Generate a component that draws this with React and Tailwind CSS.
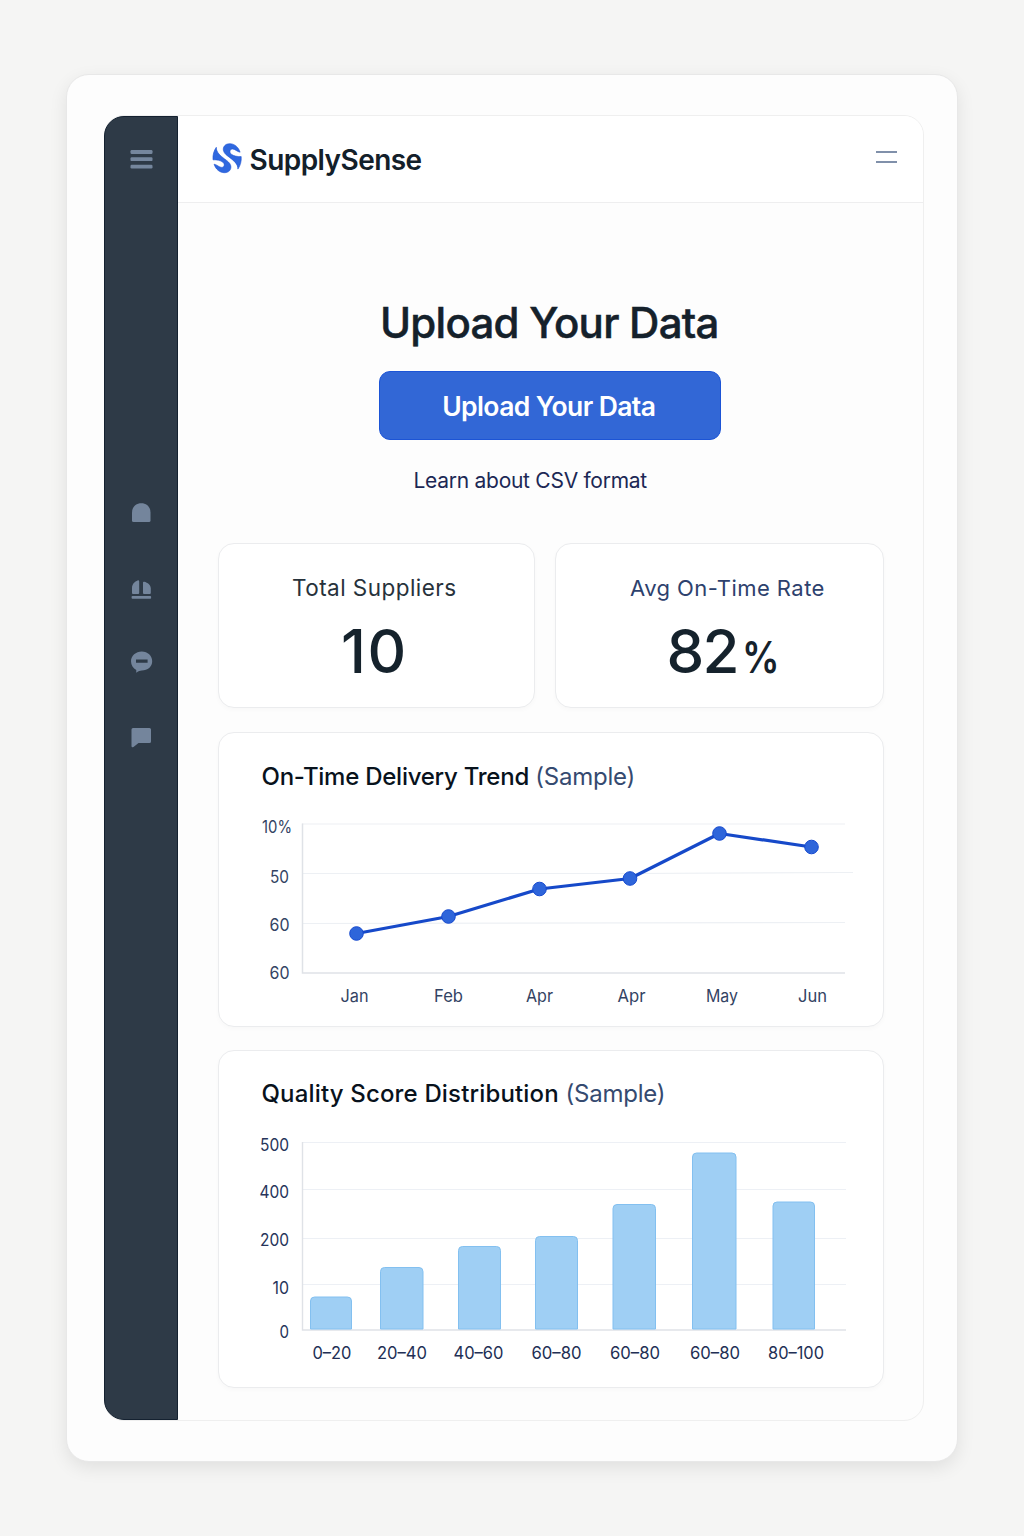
const INTER = "font-['Inter',sans-serif]";

const LOGO_HALF =
  "M4 4.300C1.600 7.500 0.300 12 0.700 16.800C4.500 16.600 8.200 17.400 10.600 19.200C12.800 21 12.200 24.200 9.600 24.400C7 24.600 4.800 21.600 1.800 21.200C3.400 26.200 7.200 29.600 12 29.700C17 29.800 19.300 26.200 18.400 22.600C17.600 19.600 15 18 12.400 16C8 12.600 4 9.600 4 4.300Z";

function Logo() {
  return (
    <svg className="mt-[27px] h-8 w-8 shrink-0" viewBox="-0.300 0 32 32" fill="#2f68df" stroke="#1a4fd2" strokeWidth="0.6" strokeLinejoin="round">
      <path d={LOGO_HALF} />
      <path d={LOGO_HALF} transform="rotate(180 14.800 15.200)" />
    </svg>
  );
}

function Sidebar() {
  return (
    <aside className="flex w-[73.500px] shrink-0 flex-col items-center border border-[#142130] bg-[#2e3a47] rounded-l-[20px]">
      <svg className="mt-[32px] h-5 w-6" viewBox="0 0 24 20" fill="#75869d">
        <rect x="1.5" y="1" width="22" height="4" rx="1.2" />
        <rect x="1.5" y="8.3" width="22" height="3.8" rx="1.2" />
        <rect x="1.5" y="15.8" width="22" height="3.6" rx="1.2" />
      </svg>
      <svg className="mt-[333px] h-[22px] w-6" viewBox="0 0 24 22" fill="#74859c">
        <path d="M3 18.500V10.500C3 5 7 1.300 12.300 1.300S21.500 5 21.500 10.500V18.500Q21.500 20 20 20H4.500Q3 20 3 18.500Z" />
      </svg>
      <svg className="mt-[54px] h-6 w-6" viewBox="0 0 24 24" fill="#74859c">
        <path d="M3 15V9.500C3 6 6 3.200 8.500 2.400Q10.200 2 10.200 3.500V15Q10.200 16 9.200 16H4Q3 16 3 15Z" />
        <path d="M14 15V4.600Q14 3.500 15.200 3.800C18.600 4.600 21.800 7 21.800 10.500V15Q21.800 16 20.800 16H15Q14 16 14 15Z" />
        <rect x="2.600" y="18" width="19.500" height="2.800" rx="0.800" />
      </svg>
      <svg className="mt-[48px] h-6 w-6" viewBox="0 0 24 24" fill="#74859c">
        <path fillRule="evenodd" d="M12.800 1.500C18.700 1.500 23.200 5.800 23.200 11.200S18.700 20.500 12.800 20.500C11 20.500 9.300 21.300 7.200 22.800L7.300 20C4.200 18.300 2 15.300 2 11.200C2 5.800 6.800 1.500 12.800 1.500ZM7 9.500V12.800H18.600V9.500Z" />
      </svg>
      <svg className="mt-[52px] h-6 w-6" viewBox="0 0 24 24" fill="#74859c">
        <path d="M4 2H20.500Q22 2 22 3.500V15.500Q22 17 20.500 17H9.500L4.500 21Q2.500 22 2.500 20V3.500Q2.500 2 4 2Z" />
      </svg>
    </aside>
  );
}

const points = [[138.5, 201.5], [230.5, 184.5], [321.5, 157], [412, 146.5], [501.5, 101.5], [593.5, 115]];
const months = [["Jan", 122.5, 28], ["Feb", 216, 29], ["Apr", 308, 27], ["Apr", 399.5, 28], ["May", 488, 32], ["Jun", 580, 29]];
const trendTicks = [["10%", 44, 100.5, 30], ["50", 52, 151, 19], ["60", 51.5, 199, 20], ["60", 51.5, 246.5, 20]];

function TrendChart() {
  return (
    <svg className="block h-full w-full" viewBox="0 0 666 295" preserveAspectRatio="none" fontFamily="Inter, sans-serif" fontSize="17">
      <path d="M84 92H627M84 141.500H412L627 140.500H635M84 191.500L627 190.500" stroke="#edf0f4" strokeWidth="1.200" fill="none" />
      <path d="M84.500 91.500V241H627" stroke="#dfe2e7" strokeWidth="1.500" fill="none" />
      <polyline points={points.map((p) => p.join(",")).join(" ")} fill="none" stroke="#1649c9" strokeWidth="3.200" strokeLinejoin="round" />
      {points.map(([x, y]) => (
        <circle key={x} cx={x} cy={y} r="6.800" fill="#2e65da" stroke="#1549cf" strokeWidth="1" />
      ))}
      {trendTicks.map(([t, x, y, w]) => (
        <text key={y} x={x} y={y} textLength={w} lengthAdjust="spacingAndGlyphs" fill="#334363">{t}</text>
      ))}
      {months.map(([t, x, w]) => (
        <text key={x} x={x} y="269.500" textLength={w} lengthAdjust="spacingAndGlyphs" fill="#334363">{t}</text>
      ))}
    </svg>
  );
}

const bars = [[92, 42, 246.5], [162, 43.5, 217], [240, 43, 196], [317, 43, 186], [394.5, 43.5, 154], [474, 44.5, 102.5], [554.5, 42.5, 151.5]];
const ranges = [["0–20", 94.5, 39], ["20–40", 159, 50], ["40–60", 235.5, 50], ["60–80", 313.5, 50], ["60–80", 392, 50], ["60–80", 472, 50], ["80–100", 550, 56]];
const scoreTicks = [["500", 42, 100.5, 29], ["400", 41.5, 147.5, 29.5], ["200", 42, 196, 29], ["10", 54.5, 244, 16.5], ["0", 61.5, 287.5, 9.5]];

function ScoreChart() {
  return (
    <svg className="block h-full w-full" viewBox="0 0 666 338" preserveAspectRatio="none" fontFamily="Inter, sans-serif" fontSize="17">
      <path d="M84 92.500H628M84 139.500H628M84 188.500H628M84 234.500H628" stroke="#edf0f5" strokeWidth="1.200" />
      <path d="M84.500 92V280H628" stroke="#dfe2e7" strokeWidth="1.400" fill="none" />
      {bars.map(([x, w, y]) => (
        <path
          key={x}
          d={`M${x + 0.5} 279V${y + 4.5}q0 -4 4 -4h${w - 9}q4 0 4 4V279Z`}
          fill="#9fcff4"
          stroke="#83c0f0"
        />
      ))}
      {scoreTicks.map(([t, x, y, w]) => (
        <text key={y} x={x} y={y} textLength={w} lengthAdjust="spacingAndGlyphs" fill="#26345a">{t}</text>
      ))}
      {ranges.map(([t, x, w]) => (
        <text key={x} x={x} y="308.500" textLength={w} lengthAdjust="spacingAndGlyphs" fill="#222f55">{t}</text>
      ))}
    </svg>
  );
}

function Card({ className, children }) {
  return (
    <section className={`rounded-[16px] border border-[#ebecee] bg-white shadow-[0_2px_5px_rgba(0,0,0,0.025)] ${className}`}>
      {children}
    </section>
  );
}

function ChartCard({ title, titleClass, className, children }) {
  return (
    <Card className={`grid ${className}`}>
      <h2 className={`z-10 col-start-1 row-start-1 ml-[42.500px] self-start whitespace-nowrap text-[24px] font-medium leading-8 text-[#08121c] ${titleClass}`}>
        {title} <span className="font-normal tracking-[-0.200px] text-[#354a70]">(Sample)</span>
      </h2>
      <div className="col-start-1 row-start-1 -m-px">{children}</div>
    </Card>
  );
}

export default function App() {
  return (
    <div className={`flex h-[1536px] w-[1024px] bg-[#f5f5f4] pl-[66px] pt-[74px] ${INTER}`}>
      <div className="flex h-[1388px] w-[892px] rounded-[23px] border border-[#e8e8e8] bg-[#fdfdfd] pl-[37px] pt-[40px] shadow-[0_6px_18px_rgba(0,0,0,0.085)]">
        <div className="flex h-[1306px] w-[820px] rounded-[20px] border border-[#efefef] bg-[#fdfdfd]">
          <div className="-ml-px flex"><Sidebar /></div>
          <div className="flex min-w-0 flex-1 flex-col">
            <header className="flex h-[87px] shrink-0 rounded-tr-[19px] border-b border-[#eeeeef] bg-white pl-[34.500px] pr-[26px]">
              <Logo />
              <span className="ml-[5.500px] mt-[25.500px] text-[28px] font-semibold leading-9 tracking-[-0.550px] text-[#13202a]">SupplySense</span>
              <div className="ml-auto mt-[35px] flex w-[21px] flex-col gap-2">
                <div className="h-[2px] bg-[#8090aa]" />
                <div className="h-[2px] bg-[#8090aa]" />
              </div>
            </header>
            <main className="flex flex-col pl-[40.500px]">
              <h1 className="ml-[162px] mt-[94px] whitespace-nowrap text-[42px] font-medium leading-[52px] tracking-[-0.750px] text-[#15212b] [-webkit-text-stroke:0.5px_#15212b]">Upload Your Data</h1>
              <button className="ml-[160.500px] mt-[22px] flex h-[69px] w-[342.500px] items-center justify-center rounded-[11px] border border-[#1c54d6] bg-[#3267d6] pr-[2px] pt-[2px] text-[26.500px] font-semibold tracking-[-0.600px] text-white">
                Upload Your Data
              </button>
              <a className="ml-[195.500px] mt-[26px] whitespace-nowrap text-[21px] leading-[30px] tracking-[-0.270px] text-[#1c2855]">Learn about CSV format</a>
              <div className="mt-[47px] flex gap-5">
                <Card className="flex h-[165px] w-[317px] flex-col">
                  <span className="ml-[73px] mt-[28px] whitespace-nowrap text-[22.500px] leading-8 tracking-[0.450px] text-[#27323b]">Total Suppliers</span>
                  <span className="ml-[122px] mt-[16px] text-[60px] font-medium leading-[62px] tracking-[1.500px] text-[#15222c]">10</span>
                </Card>
                <Card className="flex h-[165px] w-[329px] flex-col">
                  <span className="ml-[74px] mt-[28px] whitespace-nowrap text-[22px] leading-8 tracking-[0.450px] text-[#2d416d]">Avg On-Time Rate</span>
                  <span className="ml-[110.500px] mt-[16px] flex items-baseline text-[60px] font-medium leading-[62px] tracking-[-1.800px] text-[#15222c]">
                    82<span className="ml-[4px] inline-block origin-left scale-x-[0.85] text-[44px] font-semibold">%</span>
                  </span>
                </Card>
              </div>
              <ChartCard title="On-Time Delivery Trend" titleClass="mt-[28px] tracking-[-0.250px]" className="mt-6 h-[295px] w-[666px]"><TrendChart /></ChartCard>
              <ChartCard title="Quality Score Distribution" titleClass="mt-[27px] tracking-[0.160px]" className="mt-[23px] h-[338px] w-[666px]"><ScoreChart /></ChartCard>
            </main>
          </div>
        </div>
      </div>
    </div>
  );
}
